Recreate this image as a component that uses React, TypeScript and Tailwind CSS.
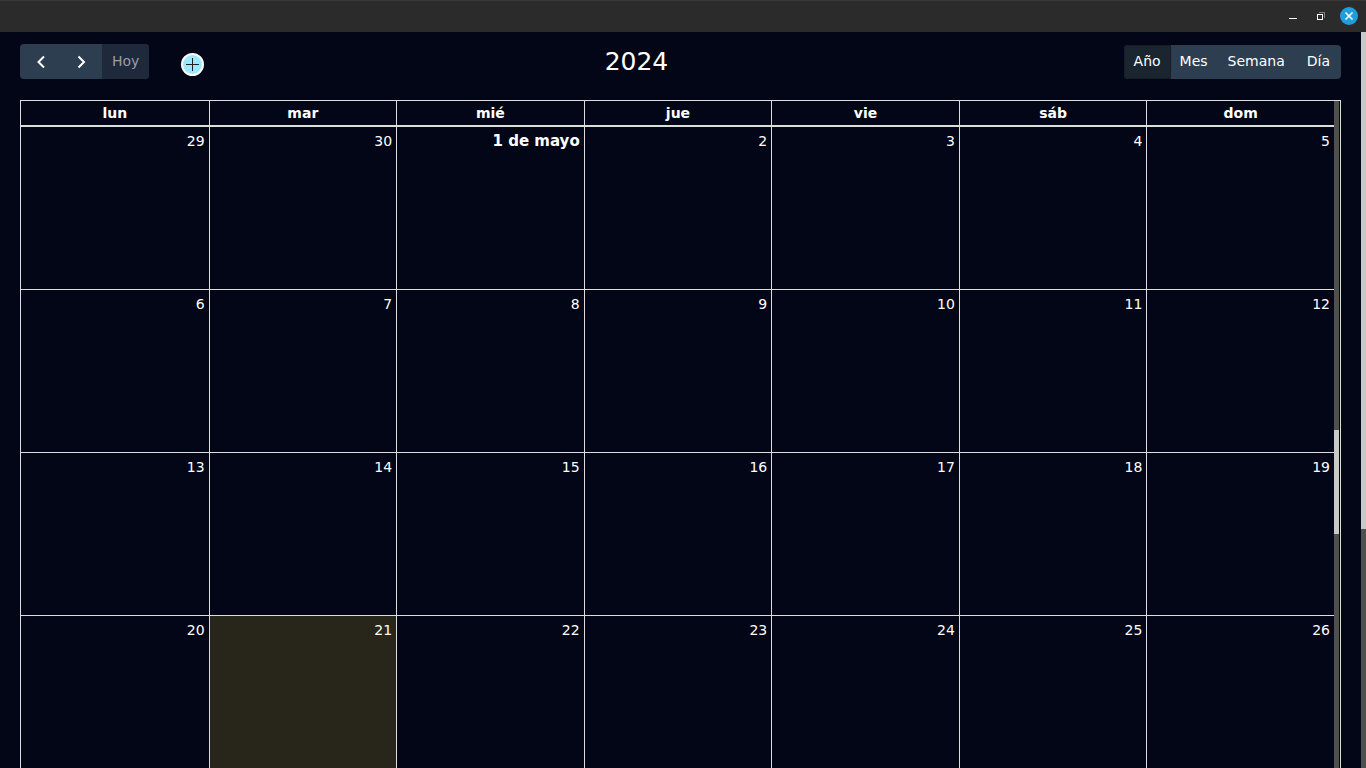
import React from "react";

const weekdays = ["lun", "mar", "mié", "jue", "vie", "sáb", "dom"];

const weeks: string[][] = [
  ["29", "30", "1 de mayo", "2", "3", "4", "5"],
  ["6", "7", "8", "9", "10", "11", "12"],
  ["13", "14", "15", "16", "17", "18", "19"],
  ["20", "21", "22", "23", "24", "25", "26"],
];

const today = "21";

function TitleBar() {
  return (
    <header className="flex h-8 shrink-0 items-center justify-end border-t border-[#383838] bg-[#2b2b2b] pb-px pr-2">
      <button type="button" aria-label="Minimizar" className="mr-4 flex h-5 w-3 items-center justify-center">
        <svg className="h-3 w-3" viewBox="0 0 12 12" shapeRendering="crispEdges">
          <rect x="2" y="8" width="8" height="1" fill="#fff" />
        </svg>
      </button>
      <button type="button" aria-label="Restaurar" className="mr-[13px] flex h-5 w-3 items-center justify-center">
        <svg className="h-3 w-3" viewBox="0 0 12 12" shapeRendering="crispEdges">
          <path d="M4 2h6v6h-1v-5h-5z" fill="#808080" />
          <path d="M2 4h6v6h-6zM3 5v4h4v-4z" fill="#fff" fillRule="evenodd" />
        </svg>
      </button>
      <button type="button" aria-label="Cerrar" className="flex h-[18px] w-[18px] items-center justify-center rounded-full bg-[#1f9ede]">
        <svg className="h-[18px] w-[18px]" viewBox="0 0 18 18">
          <path d="M5.5 5.5l7 7M12.5 5.5l-7 7" stroke="#fff" strokeWidth="1.6" />
        </svg>
      </button>
    </header>
  );
}

function Chevron({ d }: { d: string }) {
  return (
    <svg className="h-4 w-4" viewBox="0 0 16 16" fill="none">
      <path d={d} stroke="#fff" strokeWidth="2" />
    </svg>
  );
}

function Toolbar() {
  return (
    <div className="flex h-[35px] items-end">
      <div className="flex h-[35px] overflow-hidden rounded-[4px] bg-[#2c3e50]">
        <button type="button" aria-label="Anterior" className="flex w-[41px] items-center justify-center">
          <Chevron d="M11 2.5L5.5 8l5.5 5.5" />
        </button>
        <button type="button" aria-label="Siguiente" className="flex w-[41px] items-center justify-center">
          <Chevron d="M4.500 2.500L10 8l-5.500 5.500" />
        </button>
        <button type="button" disabled className="bg-[#1e2a3b] px-[10px] pb-px text-[#9b9da3]">
          Hoy
        </button>
      </div>
      <button type="button" aria-label="Añadir evento" className="ml-8 flex h-[26px] w-[23px] shrink-0 items-start">
        <svg className="h-[23px] w-[23px]" viewBox="0 0 23 23">
          <circle cx="11.5" cy="11.5" r="10.500" fill="#9be9fa" stroke="#fff" strokeWidth="2" />
          <path d="M11.500 5v13M5 11.500h13" stroke="#222" strokeWidth="1" />
        </svg>
      </button>
      <h1 className="flex-1 pr-[55px] text-center text-[25px] font-normal leading-[34px]">2024</h1>
      <div className="flex h-[34px] overflow-hidden rounded-[4px] bg-[#2c3e50]">
        <button type="button" aria-pressed="true" className="rounded-l-[4px] border border-[#151e27] bg-[#1a252f] px-[9px] pb-0.5">
          Año
        </button>
        <button type="button" className="px-[9px] pb-0.5">Mes</button>
        <button type="button" className="px-[11px] pb-0.5">Semana</button>
        <button type="button" className="px-[11px] pb-0.5">Día</button>
      </div>
    </div>
  );
}

function Calendar() {
  return (
    <div className="mt-[21px] flex min-h-0 flex-1 overflow-hidden border-x border-t border-[#ddd] pr-px">
      <div className="min-w-0 flex-1 overflow-hidden">
        <table className="w-full table-fixed border-separate border-spacing-0">
          <thead>
            <tr>
              {weekdays.map((day) => (
                <th key={day} className="h-[26px] border-b-2 border-l border-[#ddd] p-0 text-center font-bold leading-6 first:border-l-0">
                  {day}
                </th>
              ))}
            </tr>
          </thead>
          <tbody>
            {weeks.map((week) => (
              <tr key={week[0]}>
                {week.map((day) => (
                  <td
                    key={day}
                    className={
                      "h-[163px] border-b border-l border-[#ddd] px-1 py-1 text-right align-top leading-5 first:border-l-0 " +
                      (day === today ? "bg-[#28261a] " : "") +
                      (day.includes("mayo") ? "text-[15px] font-bold" : "")
                    }
                  >
                    {day}
                  </td>
                ))}
              </tr>
            ))}
          </tbody>
        </table>
      </div>
      <div className="flex w-[5px] shrink-0 flex-col bg-[#4f4f4f]">
        <div className="h-[329px] shrink-0" />
        <div className="h-[104px] shrink-0 bg-[#c8c8c8]" />
      </div>
    </div>
  );
}

export default function App() {
  return (
    <div className="flex h-screen flex-col overflow-hidden bg-[#020617] font-['DejaVu_Sans',sans-serif] text-sm text-white">
      <TitleBar />
      <div className="flex min-h-0 flex-1">
        <main className="flex min-w-0 flex-1 flex-col px-5 pt-3">
          <Toolbar />
          <Calendar />
        </main>
        <div className="w-[5px] shrink-0 bg-[#4f4f4f]">
          <div className="h-[497px] bg-[#c8c8c8]" />
        </div>
      </div>
    </div>
  );
}
